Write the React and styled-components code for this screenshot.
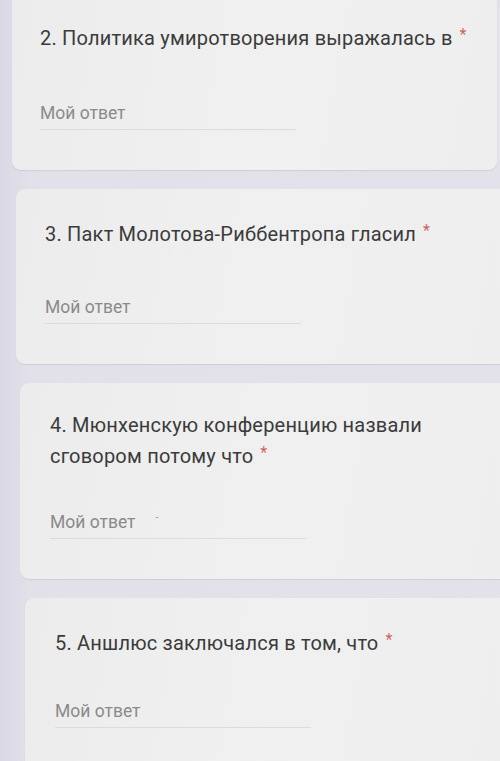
import React from "react";
import styled, { createGlobalStyle } from "styled-components";

const Global = createGlobalStyle`
  html, body {
    margin: 0;
    padding: 0;
    background: #dddce6;
    overflow: hidden;
  }
  body {
    font-family: Roboto, "Noto Sans", Arial, sans-serif;
  }
`;

const Page = styled.div`
  width: 500px;
  height: 761px;
  overflow: hidden;
  background: linear-gradient(90deg, #d9d8e5 0px, #e2e1ea 30px, #e3e2ea 100%);
  display: flex;
  flex-direction: column;
  gap: 19px;
`;

const Card = styled.section`
  margin-left: ${(p) => p.$shift}px;
  margin-right: ${(p) => p.$right}px;
  margin-top: ${(p) => p.$top || 0}px;
  flex-shrink: 0;
  background: linear-gradient(100deg, #ececec 0%, #f0f0f0 50%, #eeeeee 100%);
  border-radius: 9px;
  box-shadow: 0 1px 1px rgba(120, 120, 140, 0.18);
  padding: 28px 0 ${(p) => p.$bottom}px ${(p) => p.$inset}px;
  display: flex;
  flex-direction: column;
`;

const Title = styled.div`
  font-size: 20px;
  line-height: 28px;
  color: #3b3b3b;
  letter-spacing: 0.2px;
  margin-bottom: ${(p) => p.$gap}px;
  max-width: 440px;
`;

const Star = styled.span`
  color: #cf6464;
  margin-left: 7px;
  font-size: 16px;
  vertical-align: 5px;
`;

const Field = styled.div`
  width: 256px;
  border-bottom: 1px solid #dcdcdc;
  padding-bottom: 5px;
  font-size: 17.5px;
  line-height: 22px;
  color: #8a8a8a;
  display: flex;
  gap: 20px;
`;

const Dash = styled.span`
  color: #9a9a9a;
  font-size: 11px;
  line-height: 14px;
`;

const questions = [
  { text: "2. Политика умиротворения выражалась в", shift: 12, right: 3, inset: 28, top: -7, gap: 50, bottom: 40 },
  { text: "3. Пакт Молотова-Риббентропа гласил", shift: 16, right: -20, inset: 29, gap: 48, bottom: 40 },
  { text: "4. Мюнхенскую конференцию назвали сговором потому что", shift: 20, right: -20, inset: 30, gap: 41, bottom: 40, dash: true },
  { text: "5. Аншлюс заключался в том, что", shift: 25, right: -20, inset: 30, gap: 43, bottom: 40 },
];

export default function App() {
  return (
    <>
      <Global />
      <Page>
        {questions.map((q) => (
          <Card
            key={q.text}
            $shift={q.shift}
            $right={q.right}
            $inset={q.inset}
            $top={q.top}
            $bottom={q.bottom}
          >
            <Title $gap={q.gap}>
              {q.text}
              <Star>*</Star>
            </Title>
            <Field>
              <span>Мой ответ</span>
              {q.dash && <Dash>-</Dash>}
            </Field>
          </Card>
        ))}
      </Page>
    </>
  );
}
